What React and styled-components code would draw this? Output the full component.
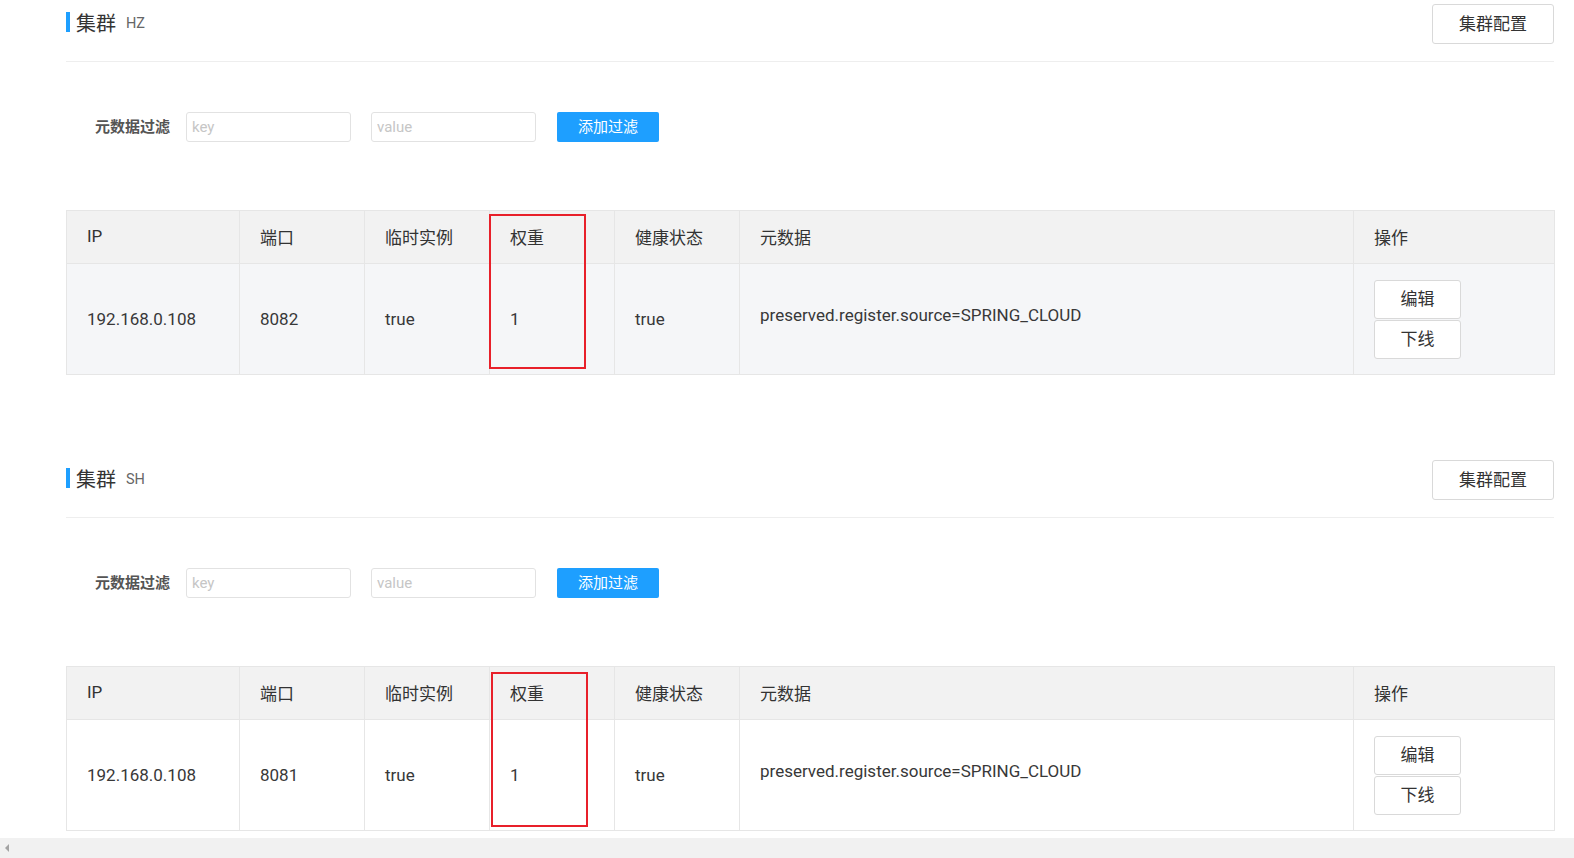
import React from 'react';
import styled, { createGlobalStyle } from 'styled-components';

const GlobalStyle = createGlobalStyle`
    html, body {
        margin: 0;
        padding: 0;
        background: #fff;
        font-family: Roboto, "Noto Sans CJK SC", "Liberation Sans", sans-serif;
        color: #333;
        overflow: hidden;
    }
`;

const clusters = [
    { name: 'HZ', port: '8082', boxShift: 0, highlight: true },
    { name: 'SH', port: '8081', boxShift: 2, highlight: false },
];

const columns = [
    { key: 'ip', title: 'IP', width: 173 },
    { key: 'port', title: '端口', width: 125 },
    { key: 'ephemeral', title: '临时实例', width: 125 },
    { key: 'weight', title: '权重', width: 125 },
    { key: 'healthy', title: '健康状态', width: 125 },
    { key: 'metadata', title: '元数据', width: 614 },
    { key: 'ops', title: '操作', width: 201 },
];

const ClusterSection = ({ cluster }) => {
    const row = {
        ip: '192.168.0.108',
        port: cluster.port,
        ephemeral: 'true',
        weight: '1',
        healthy: 'true',
        metadata: 'preserved.register.source=SPRING_CLOUD',
    };

    return (
        <Section>
            <SectionHeader>
                <Title>
                    <TitleBar />
                    <span>集群</span>
                    <SubTitle>{cluster.name}</SubTitle>
                </Title>
                <OutlineButton>集群配置</OutlineButton>
            </SectionHeader>

            <FilterRow>
                <FilterLabel>元数据过滤</FilterLabel>
                <FilterInput placeholder="key" />
                <FilterInput placeholder="value" />
                <PrimaryButton>添加过滤</PrimaryButton>
            </FilterRow>

            <Table>
                <colgroup>
                    {columns.map(c => <col key={c.key} style={{ width: c.width }} />)}
                </colgroup>
                <thead>
                    <tr>
                        {columns.map(c => (
                            <Th key={c.key}>
                                {c.title}
                                {c.key === 'weight' && <Mark $shift={cluster.boxShift} />}
                            </Th>
                        ))}
                    </tr>
                </thead>
                <tbody>
                    <BodyRow $highlight={cluster.highlight}>
                        {columns.map(c => {
                            if (c.key === 'ops') {
                                return (
                                    <Td key={c.key}>
                                        <OpsStack>
                                            <OutlineButton $small>编辑</OutlineButton>
                                            <OutlineButton $small>下线</OutlineButton>
                                        </OpsStack>
                                    </Td>
                                );
                            }
                            return (
                                <Td key={c.key} $raised={c.key === 'metadata'}>
                                    {row[c.key]}
                                </Td>
                            );
                        })}
                    </BodyRow>
                </tbody>
            </Table>
        </Section>
    );
};

const App = () => {
    return (
        <>
            <GlobalStyle />
            <Page>
                <Content>
                    {clusters.map(c => <ClusterSection key={c.name} cluster={c} />)}
                </Content>
                <HScrollBar>
                    <ArrowLeft />
                </HScrollBar>
            </Page>
        </>
    );
};

export default App;

const Page = styled.div`
    height: 100vh;
    display: flex;
    flex-direction: column;
`;

const Content = styled.div`
    flex: 1;
    overflow: hidden;
    padding: 0 20px 0 66px;
`;

const Section = styled.section`
    & + & {
        margin-top: 81px;
    }
`;

const SectionHeader = styled.div`
    display: flex;
    justify-content: space-between;
    align-items: flex-start;
    height: 57px;
    padding-top: 4px;
    border-bottom: 1px solid #eeeeee;
`;

const Title = styled.div`
    display: flex;
    align-items: center;
    margin-top: 8px;
    height: 20px;
    font-size: 20px;
    color: #333;
`;

const TitleBar = styled.i`
    display: block;
    width: 4px;
    height: 20px;
    background: #1e9fff;
    margin-right: 6px;
`;

const SubTitle = styled.span`
    font-size: 14.5px;
    color: #666;
    margin-left: 10px;
    margin-top: 2px;
`;

const OutlineButton = styled.button`
    box-sizing: border-box;
    width: ${p => (p.$small ? '87px' : '122px')};
    height: ${p => (p.$small ? '39px' : '40px')};
    background: #fff;
    border: 1px solid #d9d9d9;
    border-radius: 3px;
    font-family: inherit;
    font-size: 17px;
    color: #333;
    padding: 0 0 3px;
    cursor: pointer;
`;

const FilterRow = styled.div`
    display: flex;
    align-items: center;
    margin-top: 50px;
    padding-left: 29px;
    height: 30px;
`;

const FilterLabel = styled.label`
    width: 91px;
    font-size: 15px;
    font-weight: 700;
    color: #555;
    padding-bottom: 3px;
`;

const FilterInput = styled.input`
    box-sizing: border-box;
    width: 165px;
    height: 30px;
    margin-right: 20px;
    padding: 0 5px;
    border: 1px solid #e2e2e2;
    border-radius: 3px;
    font-family: inherit;
    font-size: 15px;
    color: #333;
    outline: none;

    &::placeholder {
        color: #c6c6c6;
    }
`;

const PrimaryButton = styled.button`
    box-sizing: border-box;
    width: 102px;
    height: 30px;
    border: none;
    border-radius: 2px;
    background: #1e9fff;
    color: #fff;
    font-family: inherit;
    font-size: 15px;
    padding: 0 0 3px;
    margin-left: 1px;
`;

const Table = styled.table`
    margin-top: 68px;
    width: 1488px;
    table-layout: fixed;
    border-collapse: collapse;
    font-size: 17px;
`;

const Th = styled.th`
    position: relative;
    height: 50px;
    padding: 0 20px 2px;
    text-align: left;
    font-weight: 400;
    color: #333;
    background: #f2f2f2;
    border: 1px solid #e6e6e6;
`;

const Mark = styled.span`
    position: absolute;
    left: ${p => -1 + p.$shift}px;
    top: ${p => 3 + p.$shift}px;
    width: 97px;
    height: 155px;
    box-sizing: border-box;
    border: 2px solid #e8202a;
    pointer-events: none;
`;

const BodyRow = styled.tr`
    background: ${p => (p.$highlight ? '#f5f6f8' : '#fff')};
`;

const Td = styled.td`
    height: ${p => (p.$raised ? '102px' : '110px')};
    padding: 0 20px ${p => (p.$raised ? '8px' : '0')};
    color: #383838;
    border: 1px solid #e6e6e6;
    white-space: nowrap;
`;

const OpsStack = styled.div`
    display: flex;
    flex-direction: column;
    gap: 1px;
`;

const HScrollBar = styled.div`
    flex: 0 0 20px;
    background: #f1f1f1;
    display: flex;
    align-items: center;
    padding-left: 5px;
`;

const ArrowLeft = styled.span`
    width: 0;
    height: 0;
    border-top: 4px solid transparent;
    border-bottom: 4px solid transparent;
    border-right: 4px solid #a3a3a3;
`;
